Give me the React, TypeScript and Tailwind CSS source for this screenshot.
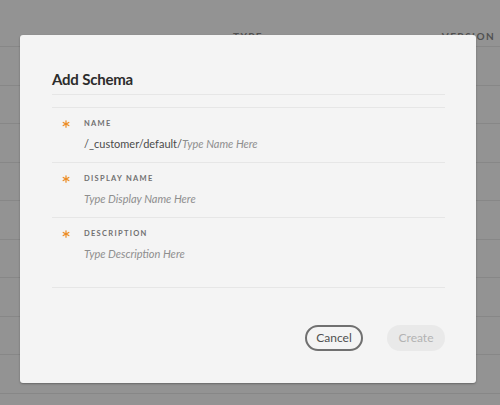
const rows = Array.from({ length: 9 });

const fields = [
  { label: "NAME", prefix: "/_customer/default/", placeholder: "Type Name Here", tall: false },
  { label: "DISPLAY NAME", prefix: "", placeholder: "Type Display Name Here", tall: false },
  { label: "DESCRIPTION", prefix: "", placeholder: "Type Description Here", tall: true },
];

const Star = () => (
  <svg width="8" height="8" viewBox="0 0 8 8" className="block">
    <g stroke="#ec8a1f" strokeWidth="1.2" strokeLinecap="round">
      <line x1="4" y1="0.8" x2="4" y2="7.2" />
      <line x1="1.2" y1="2.4" x2="6.8" y2="5.6" />
      <line x1="1.2" y1="5.6" x2="6.8" y2="2.4" />
    </g>
  </svg>
);

const App = () => {
  return (
    <div className="relative w-[500px] h-[405px] overflow-hidden bg-[#939393]" style={{ fontFamily: "Lato, 'Open Sans', sans-serif" }}>
      {/* table behind the dimmed overlay */}
      <div className="flex h-[47px] items-end border-b border-[#878787] pb-[4px] text-[10px] font-bold leading-[12px] tracking-[1.4px] text-[#505050]">
        <span className="ml-[233px]">TYPE</span>
        <span className="ml-auto mr-[5px]">VERSION</span>
      </div>
      {rows.map((_, i) => (
        <div key={i} className="h-[38.5px] border-b border-[#878787]" />
      ))}

      {/* modal */}
      <div className="absolute left-[20px] top-[35px] flex h-[348px] w-[456px] flex-col rounded-[3px] bg-[#f4f4f4] pl-[32px] pr-[31px] shadow-[0_1px_2px_rgba(0,0,0,0.3)]">
        <div className="flex h-[60px] items-end border-b border-[#e6e6e6] pb-[5px]">
          <h1 className="text-[15px] font-bold leading-[20px] tracking-[-0.2px] text-[#2c2c2c]">Add Schema</h1>
        </div>
        <div className="mt-[12px] border-t border-[#e6e6e6]">
          {fields.map((f) => (
            <div
              key={f.label}
              className={`flex border-b border-[#e6e6e6] pt-[11px] ${f.tall ? "h-[70px]" : "h-[55px]"}`}
            >
              <div className="w-[32px] pl-[10px] pt-[1px]">
                <Star />
              </div>
              <div className="flex flex-col">
                <span className="text-[7.5px] font-bold leading-[10px] tracking-[1.3px] text-[#707070]">{f.label}</span>
                <span className="mt-[6px] text-[11px] leading-[18px] text-[#4b4b4b]">
                  {f.prefix}
                  <span className="italic text-[#8e8e8e]">{f.placeholder}</span>
                </span>
              </div>
            </div>
          ))}
        </div>
        <div className="mt-[37px] flex justify-end gap-[24px]">
          <button className="h-[26px] w-[58px] rounded-full border-2 border-[#707070] text-[12px] text-[#505050]">
            Cancel
          </button>
          <button className="h-[26px] w-[58px] rounded-full bg-[#e9e9e9] text-[12px] text-[#b3b3b3]">
            Create
          </button>
        </div>
      </div>
    </div>
  );
};

export default App;
